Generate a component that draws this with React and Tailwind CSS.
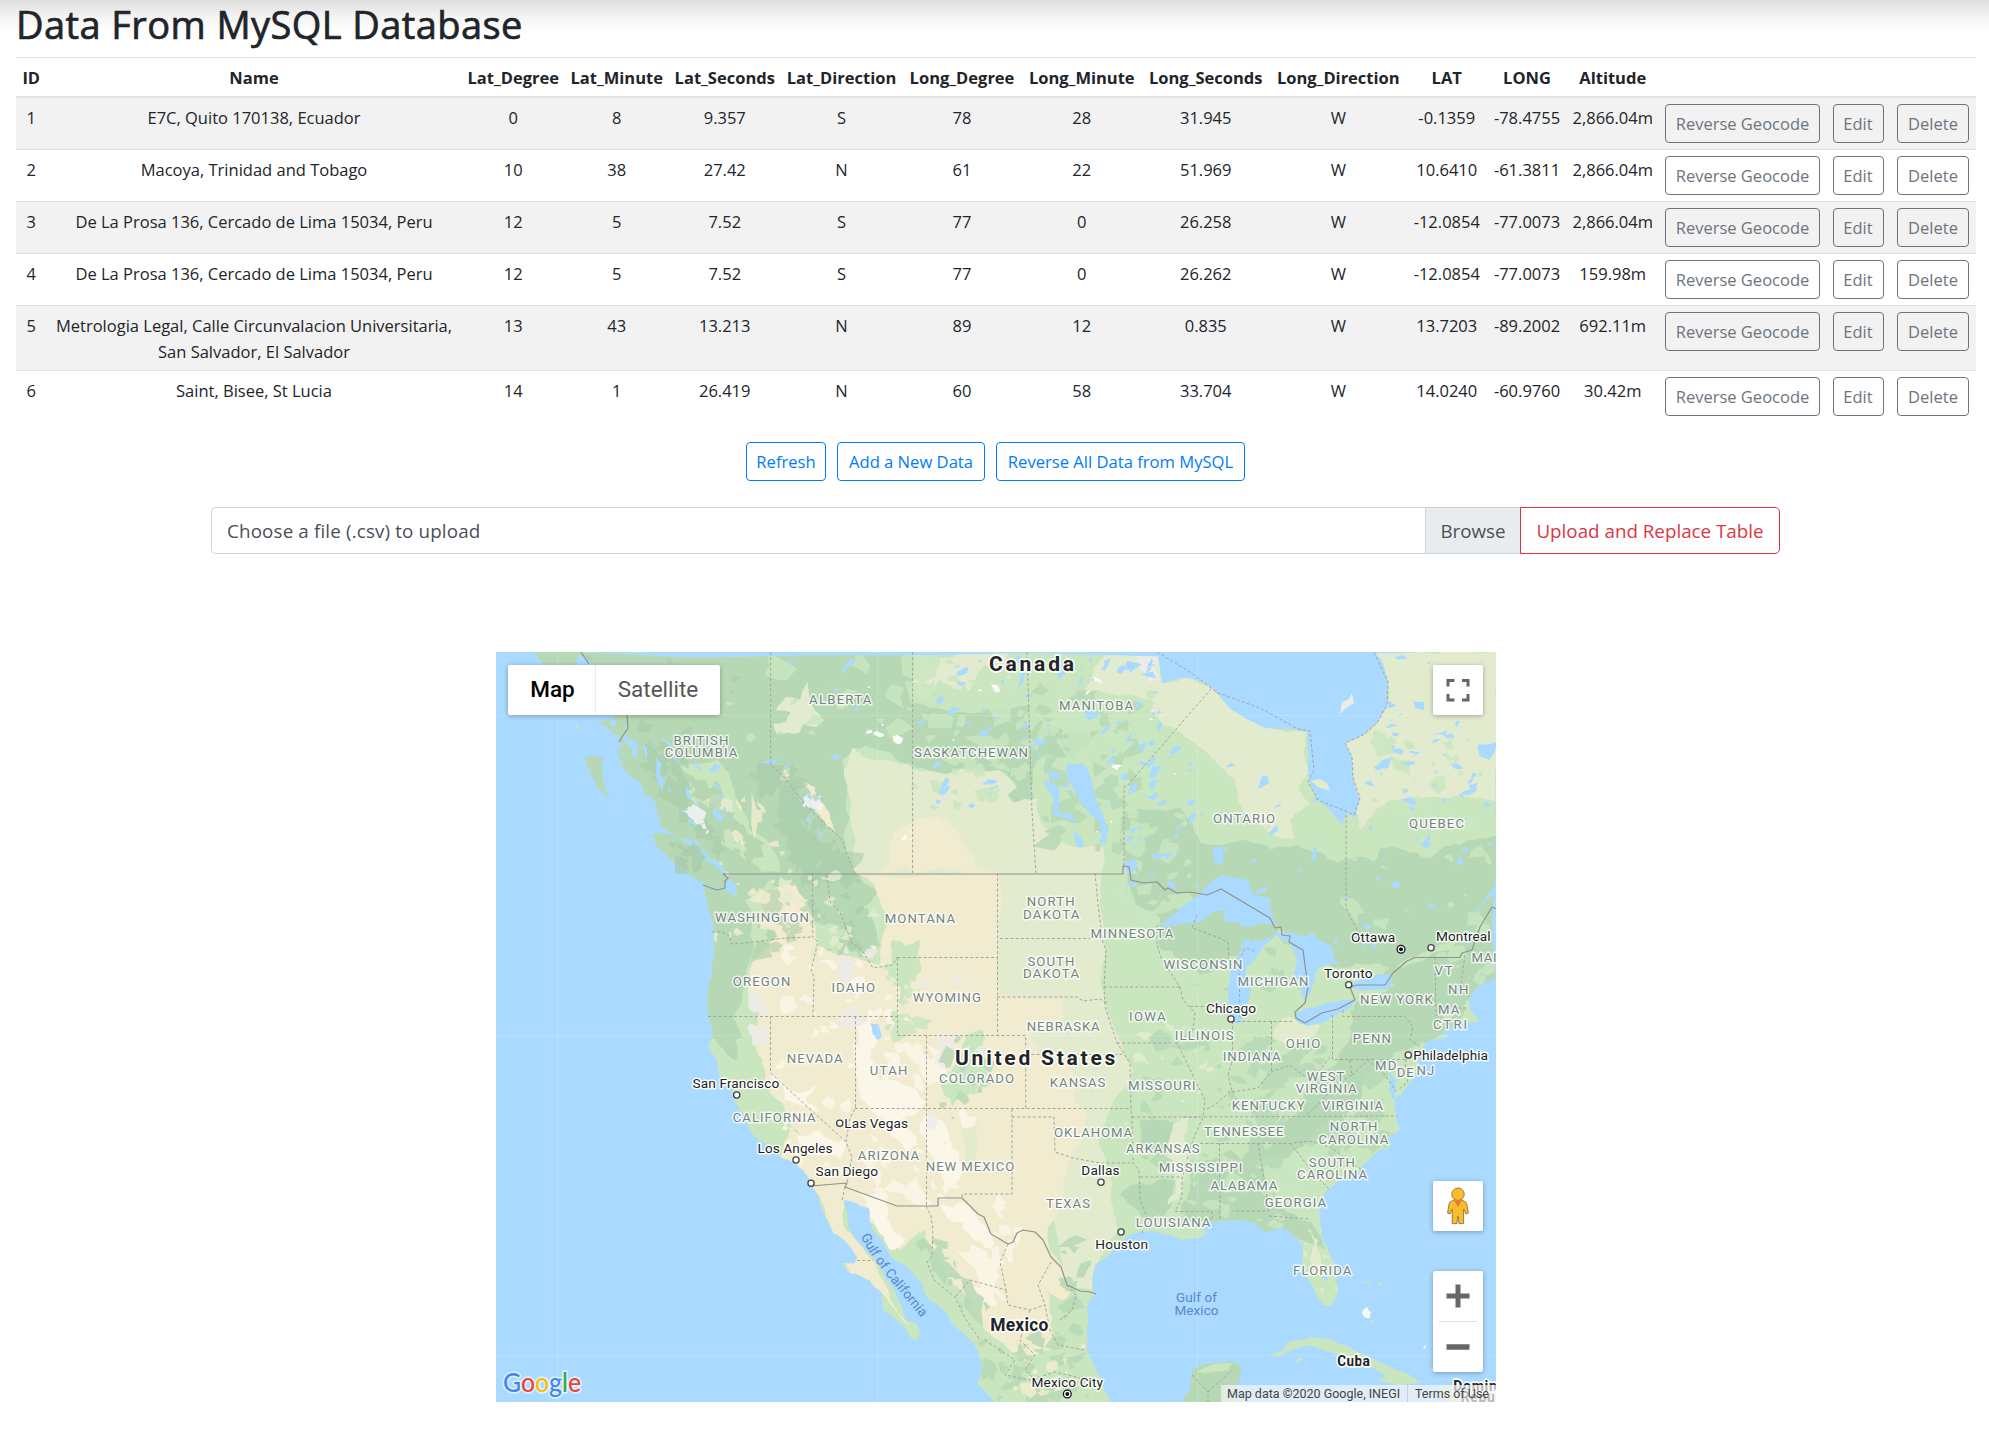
import React from "react";

/* ---------- table data ---------- */

const HEADERS = [
  "ID", "Name", "Lat_Degree", "Lat_Minute", "Lat_Seconds", "Lat_Direction",
  "Long_Degree", "Long_Minute", "Long_Seconds", "Long_Direction", "LAT", "LONG", "Altitude",
];

const COLUMN_WIDTHS = [30.5, 415, 103.5, 103.5, 112.5, 121, 120, 119.5, 128.5, 136.5, 80.5, 80, 91.5, 167.5, 64.5, 85.5];

const ROWS = [
  ["1", "E7C, Quito 170138, Ecuador", "0", "8", "9.357", "S", "78", "28", "31.945", "W", "-0.1359", "-78.4755", "2,866.04m"],
  ["2", "Macoya, Trinidad and Tobago", "10", "38", "27.42", "N", "61", "22", "51.969", "W", "10.6410", "-61.3811", "2,866.04m"],
  ["3", "De La Prosa 136, Cercado de Lima 15034, Peru", "12", "5", "7.52", "S", "77", "0", "26.258", "W", "-12.0854", "-77.0073", "2,866.04m"],
  ["4", "De La Prosa 136, Cercado de Lima 15034, Peru", "12", "5", "7.52", "S", "77", "0", "26.262", "W", "-12.0854", "-77.0073", "159.98m"],
  ["5", "Metrologia Legal, Calle Circunvalacion Universitaria, San Salvador, El Salvador", "13", "43", "13.213", "N", "89", "12", "0.835", "W", "13.7203", "-89.2002", "692.11m"],
  ["6", "Saint, Bisee, St Lucia", "14", "1", "26.419", "N", "60", "58", "33.704", "W", "14.0240", "-60.9760", "30.42m"],
];

function RowButton({ children, className }) {
  return (
    <button className={`h-[39px] rounded-[4px] border border-[#6c757d] text-center text-[16.5px] leading-[26px] whitespace-nowrap text-[#6c757d] ${className}`}>
      {children}
    </button>
  );
}

function DataTable() {
  return (
    <table className="w-[1960px] table-fixed border-separate border-spacing-0 text-center text-[16.5px] leading-[26px] text-[#212529]">
      <colgroup>
        {COLUMN_WIDTHS.map((w, i) => <col key={i} style={{ width: w }} />)}
      </colgroup>
      <thead>
        <tr className="h-[41px]">
          {HEADERS.map((h) => (
            <th key={h} className="border-t border-b-2 border-[#dee2e6] p-0 pt-0.5 align-middle font-bold whitespace-nowrap">{h}</th>
          ))}
          {[0, 1, 2].map((i) => <th key={i} className="border-t border-b-2 border-[#dee2e6] p-0" />)}
        </tr>
      </thead>
      <tbody>
        {ROWS.map((row, r) => {
          const line = r === 0 ? "" : "border-t border-[#dee2e6]";
          const height = r === 0 ? "h-[51px]" : r === 4 ? "h-[65px]" : "h-[52px]";
          return (
            <tr key={r} className={`${height} ${r % 2 === 0 ? "bg-[#f2f2f2]" : "bg-white"}`}>
              {row.map((cell, c) => (
                <td key={c} className={`${line} ${c === 1 ? "px-1.5" : "px-0 whitespace-nowrap"} pt-[7px] pb-0 align-top`}>{cell}</td>
              ))}
              <td className={`${line} p-0 pt-1.5 pl-[6.5px] text-left align-top`}><RowButton className="w-[155px]">Reverse Geocode</RowButton></td>
              <td className={`${line} p-0 pt-1.5 pl-[6.5px] text-left align-top`}><RowButton className="w-[51px]">Edit</RowButton></td>
              <td className={`${line} p-0 pt-1.5 pl-[6.5px] text-left align-top`}><RowButton className="w-[72px]">Delete</RowButton></td>
            </tr>
          );
        })}
      </tbody>
    </table>
  );
}

function ActionButton({ children, className }) {
  return (
    <button className={`h-[39px] rounded-[4px] border border-[#007bff] text-[16.6px] leading-[26px] whitespace-nowrap text-[#007bff] ${className}`}>
      {children}
    </button>
  );
}

/* ---------- map geometry ---------- */

function rng(seed) {
  let a = seed;
  return () => {
    a = (a + 0x6d2b79f5) | 0;
    let t = Math.imul(a ^ (a >>> 15), 1 | a);
    t = (t + Math.imul(t ^ (t >>> 7), 61 | t)) ^ t;
    return ((t ^ (t >>> 14)) >>> 0) / 4294967296;
  };
}

function parse(str) {
  return str.trim().split(/\s+/).map((p) => p.split(",").map(Number));
}

/* Subdivides an outline with midpoint displacement so that it reads as a natural edge. */
function rough(str, amp, seed) {
  let pts = parse(str);
  const rand = rng(seed);
  for (let pass = 0; pass < 3; pass++) {
    const next = [];
    for (let i = 0; i < pts.length; i++) {
      const [x1, y1] = pts[i];
      const [x2, y2] = pts[(i + 1) % pts.length];
      next.push(pts[i]);
      const len = Math.hypot(x2 - x1, y2 - y1);
      if (len > 5) {
        const d = (rand() - 0.5) * Math.min(len, 50) * amp;
        next.push([(x1 + x2) / 2 - ((y2 - y1) / len) * d, (y1 + y2) / 2 + ((x2 - x1) / len) * d]);
      }
    }
    pts = next;
  }
  return pts.map(([x, y]) => `${x.toFixed(1)},${y.toFixed(1)}`).join(" ");
}

/* Small irregular patches spread over a slanted box. */
function scatter({ box, n, size, seed, slant = 0, stretch = 1.3, angle = 0 }) {
  const rand = rng(seed);
  const [x, y, w, h] = box;
  let d = "";
  for (let i = 0; i < n; i++) {
    const v = rand();
    const cx = x + rand() * w + v * slant;
    const cy = y + v * h;
    const s = size * (0.3 + rand() * rand() * 1.6);
    const k = 4 + Math.floor(rand() * 5);
    const turn = angle + (rand() - 0.5) * 1.4;
    const pts = [];
    for (let j = 0; j < k; j++) {
      const a = (j / k) * Math.PI * 2 + rand() * 0.8;
      const r = s * (0.3 + rand() * 0.9);
      const px = Math.cos(a) * r * stretch;
      const py = Math.sin(a) * r;
      pts.push(`${(cx + px * Math.cos(turn) - py * Math.sin(turn)).toFixed(1)} ${(cy + px * Math.sin(turn) + py * Math.cos(turn)).toFixed(1)}`);
    }
    d += `M${pts.join("L")}Z`;
  }
  return d;
}

const WATER = "#aadaff";
const FOREST = "#b7d8b5";
const GREEN = "#c9e6bf";
const PLAIN = "#e3ebcf";
const SAND = "#f1ebcf";
const PALE = "#faf6e8";
const ROCK = "#ecebe6";
const SHADE = "#a6cba8";
const SNOW = "#f3f4f4";

const MAINLAND =
  "578,652 588,660 600,680 608,700 610,716 596,722 612,731 621,742 617,752 623,768 640,782 645,795 653,798 657,812 661,827 677,838 698,842 703,855 723,867 727,876 735,884 737,898 731,893 723,889 704,887 707,902 713,922 714,940 712,973 707,993 708,1013 713,1030 708,1047 717,1060 720,1077 732,1090 738,1107 748,1127 758,1140 780,1157 795,1163 805,1173 813,1188 820,1203 827,1220 833,1233 847,1243 857,1257 854,1264 842,1263 850,1273 870,1280 882,1293 883,1310 900,1323 910,1337 915,1341 920,1335 916,1323 905,1320 897,1297 885,1277 873,1257 860,1243 848,1227 844,1200 853,1202 869,1208 870,1223 882,1240 895,1260 913,1273 923,1285 927,1298 943,1310 963,1333 977,1350 982,1367 977,1383 990,1397 996,1404 1112,1404 1102,1383 1093,1363 1087,1350 1086,1330 1087,1307 1094,1295 1092,1280 1095,1265 1113,1250 1130,1235 1153,1231 1170,1235 1183,1240 1200,1238 1208,1233 1200,1225 1220,1222 1243,1220 1255,1223 1267,1233 1283,1228 1297,1238 1303,1247 1302,1263 1308,1278 1315,1292 1323,1305 1332,1305 1338,1290 1337,1270 1327,1247 1320,1222 1318,1207 1327,1190 1340,1180 1360,1170 1367,1162 1380,1150 1390,1147 1388,1137 1400,1130 1397,1120 1395,1100 1402,1093 1412,1080 1420,1067 1418,1057 1425,1043 1449,1037 1440,1033 1457,1023 1480,1022 1470,1010 1470,997 1480,985 1496,978 1500,650";

const HUDSON =
  "1157,648 1160,668 1162,683 1180,678 1190,678 1213,688 1232,710 1265,728 1290,729 1307,732 1308,768 1310,783 1318,800 1330,810 1342,825 1347,813 1355,818 1360,800 1353,778 1352,757 1345,743 1363,735 1377,723 1387,707 1388,682 1383,663 1373,648";

const LAKES = [
  "1160,926 1180,908 1200,895 1223,875 1248,880 1255,895 1270,897 1272,912 1277,927 1262,923 1247,927 1223,920 1227,908 1213,912 1200,922 1180,924",
  "1228,1003 1230,973 1238,953 1254,941 1272,936 1266,944 1258,955 1247,966 1246,978 1251,988 1248,1003 1242,1022 1232,1023",
  "1272,934 1290,932 1312,937 1332,947 1340,967 1330,963 1318,967 1314,982 1310,994 1305,1004 1301,988 1303,978 1294,980 1297,963 1290,945 1280,938",
  "1295,1013 1313,1008 1337,1002 1354,999 1350,1008 1323,1023 1307,1026 1296,1020",
  "1348,987 1363,978 1380,974 1393,977 1388,989 1360,991",
  "1068,763 1083,763 1092,782 1098,805 1107,825 1105,843 1099,843 1100,822 1085,808 1072,785 1067,777",
  "1044,780 1054,783 1060,792 1058,812 1072,814 1076,823 1070,820 1054,816 1053,798 1046,787",
  "1045,770 1056,772 1062,780 1052,778",
  "1072,830 1080,836 1084,847 1077,847",
  "1016,655 1026,660 1024,680 1018,690 1020,675",
  "1212,848 1222,846 1223,865 1214,862",
  "1422,843 1436,820 1430,838 1425,850",
  "1374,767 1392,757 1388,768 1376,770",
  "1400,762 1416,762 1408,766",
  "1478,745 1496,742 1490,760 1479,755",
  "1413,700 1424,702 1424,710 1415,708",
  "1388,700 1396,706 1388,708",
  "1433,735 1447,730 1445,735",
  "956,672 968,667 967,673 958,676",
  "980,732 988,728 988,736 981,737",
  "870,1023 878,1024 882,1036 878,1040 872,1032",
  "1124,862 1136,858 1138,866 1128,875",
  "1496,882 1484,900 1470,915 1478,911 1496,892",
  "1390,1070 1396,1080 1396,1100 1392,1098 1390,1082",
  "1322,1277 1328,1275 1328,1281",
];

const ZONES = [
  ["F1", "534,652 915,650 912,700 980,712 1028,705 1040,720 1100,730 1075,760 1045,755 1030,790 1035,800 1015,803 1008,795 1017,785 1000,770 973,770 943,773 917,768 900,762 853,748 842,760 846,800 852,870 880,890 866,905 880,945 860,958 845,930 822,925 800,900 770,880 745,900 752,940 745,985 733,1020 742,1040 738,1060 715,1040 700,1013 705,930 690,880 640,800 580,740", FOREST, 0.3],
  ["F2", "1125,812 1180,808 1200,842 1247,840 1297,845 1320,852 1337,862 1373,862 1380,848 1427,858 1460,845 1500,836 1500,990 1466,1000 1440,1035 1400,1040 1350,1030 1356,1002 1395,985 1330,965 1280,928 1240,955 1225,960 1200,975 1180,960 1160,948 1160,920 1135,905 1128,870", FOREST, 0.3],
  ["F3", "1350,1010 1420,1005 1440,1030 1395,1052 1365,1075 1350,1110 1310,1140 1280,1160 1240,1165 1250,1135 1300,1110 1310,1080 1338,1060", FOREST, 0.3],
  ["F4", "1190,1160 1230,1150 1262,1165 1275,1205 1312,1222 1325,1250 1300,1240 1265,1232 1230,1222 1180,1212 1190,1190", FOREST, 0.3],
  ["F5", "1140,1120 1180,1122 1170,1150 1140,1150", FOREST, 0.35],
  ["F6", "1130,1185 1175,1180 1165,1215 1140,1215 1120,1195", FOREST, 0.35],
  ["L0", "680,766 718,760 732,785 735,800 750,830 768,842 780,872 762,872 740,855 722,845 712,825 690,805", GREEN, 0.25],
  ["L6", "706,800 718,794 732,800 733,812 718,812", PLAIN, 0.3],
  ["L1", "853,748 900,764 943,774 973,770 1000,770 1017,788 1007,795 1013,803 1037,798 1040,822 1057,838 1073,847 1103,847 1102,873 1100,905 1105,945 1105,1000 1120,1040 1133,1070 1110,1110 1098,1140 1108,1170 1113,1207 1118,1230 1100,1257 1092,1290 1070,1290 1030,1150 990,1000 870,880 853,870 850,812 844,770", PLAIN, 0.2],
  ["L2", "1085,690 1110,650 1157,650 1162,683 1190,677 1213,688 1232,710 1265,728 1307,732 1308,768 1298,790 1310,805 1290,820 1295,838 1280,838 1262,825 1245,815 1235,780 1215,760 1190,740 1160,722 1150,700", PLAIN, 0.2],
  ["L3", "1373,650 1500,650 1500,802 1460,795 1440,797 1415,800 1390,800 1375,810 1360,830 1357,800 1352,755 1345,743 1377,723 1388,705 1388,680", PLAIN, 0.2],
  ["L4", "915,652 1010,650 1010,680 985,665 970,690 940,680 925,700 915,690", PLAIN, 0.3],
  ["L5", "786,697 800,700 808,682 810,700 824,720 815,727 803,724 800,732 776,733 773,724 786,722 790,712 776,710", PLAIN, 0.2],
  ["R0", "1135,652 1160,652 1157,680 1148,682 1140,668", ROCK, 0.2],
  ["S2", "802,782 815,787 830,815 836,832 826,826 812,806", SAND, 0.3],
  ["S3", "783,770 790,768 790,780 780,780", SAND, 0.3],
  ["S0", "905,825 925,818 950,822 965,845 980,870 880,875 890,860 893,835", SAND, 0.3],
  ["S1", "866,874 998,873 998,945 1000,995 1060,997 1064,1020 1030,1035 1040,1058 1072,1070 1074,1100 1088,1113 1083,1140 1070,1160 1062,1205 1048,1227 1050,1250 1072,1287 1055,1320 1062,1350 1020,1360 985,1330 950,1290 932,1255 925,1230 900,1250 870,1222 844,1200 846,1230 875,1262 905,1320 915,1338 882,1293 850,1273 830,1225 813,1188 780,1157 790,1130 770,1100 752,1040 760,1010 748,1000 752,960 775,935 760,925 770,890 790,880 812,910 818,945 840,955 880,965 890,920", SAND, 0.18],
  ["G1", "735,1040 752,1040 765,1080 785,1110 800,1135 782,1125 760,1095 748,1110 738,1085", GREEN, 0.3],
  ["G2", "918,1230 935,1250 950,1280 972,1310 985,1345 970,1340 945,1300 925,1270", GREEN, 0.3],
  ["G3", "1045,1290 1062,1300 1085,1300 1086,1350 1110,1404 990,1404 975,1375 985,1350 1010,1370 1045,1370 1062,1345", GREEN, 0.35],
  ["G4", "965,1035 982,1030 985,1060 975,1095 950,1115 940,1085 955,1065", GREEN, 0.5],
  ["G5", "892,940 920,940 915,980 905,1010 898,985", GREEN, 0.5],
  ["G6", "960,1125 980,1120 975,1160 962,1165", PLAIN, 0.5],
  ["W1", "855,1025 870,1020 868,1060 880,1080 905,1085 925,1100 900,1120 918,1145 905,1150 888,1120 870,1108 858,1080", PALE, 0.4],
  ["W2", "770,1075 790,1090 815,1085 805,1100 825,1115 800,1105 785,1100", PALE, 0.4],
  ["W3", "797,1135 820,1130 845,1140 840,1160 818,1155 800,1148", PALE, 0.4],
  ["W4", "925,1115 945,1125 955,1150 960,1180 945,1195 935,1170 928,1150", PALE, 0.4],
  ["W5", "855,1190 880,1195 890,1225 905,1240 890,1250 875,1225 868,1208", PALE, 0.35],
  ["W6", "940,1205 965,1202 985,1225 992,1250 970,1235 950,1220", PALE, 0.4],
  ["K1", "750,990 765,1000 768,1015 750,1010", ROCK, 0.4],
  ["K2", "748,1025 768,1028 765,1048 752,1045", ROCK, 0.4],
  ["K3", "838,955 850,955 855,970 848,985 838,975", ROCK, 0.4],
  ["P1", "1283,1018 1296,1020 1320,1025 1290,1045 1272,1040", PLAIN, 0.4],
  ["P2", "1180,1120 1196,1115 1190,1160 1178,1200 1168,1205 1175,1170", PLAIN, 0.5],
  ["P3", "1308,1228 1318,1240 1322,1270 1310,1262", PLAIN, 0.4],
  ["G7", "1398,965 1430,950 1470,930 1450,950 1420,962 1395,972", GREEN, 0.3],
  ["G8", "1310,985 1345,968 1390,968 1350,990 1315,1005", GREEN, 0.3],
];

const PATCHES = [
  { box: [625, 745, 50, 110], slant: 90, n: 90, size: 8, seed: 3, stretch: 1.6, angle: 0.8, color: SHADE },
  { box: [750, 770, 45, 110], slant: 60, n: 110, size: 9, seed: 4, stretch: 2, angle: 2.2, color: SHADE },
  { box: [505, 652, 240, 90], n: 30, size: 8, seed: 5, color: SHADE },
  { box: [755, 880, 110, 70], n: 36, size: 8, seed: 6, color: SHADE },
  { box: [915, 660, 240, 150], n: 95, size: 11, seed: 7, stretch: 1.3, color: GREEN },
  { box: [1040, 690, 100, 160], n: 45, size: 10, seed: 8, color: FOREST },
  { box: [1120, 790, 70, 130], n: 24, size: 9, seed: 9, color: GREEN },
  { box: [720, 652, 190, 90], n: 14, size: 10, seed: 10, color: GREEN },
  { box: [700, 840, 100, 100], n: 16, size: 6, seed: 11, color: SAND },
  { box: [780, 870, 100, 90], n: 26, size: 6, seed: 12, color: PLAIN },
  { box: [780, 940, 120, 160], n: 30, size: 8, seed: 13, color: PALE },
  { box: [860, 1040, 110, 160], n: 50, size: 9, seed: 14, stretch: 1.6, angle: 1, color: PALE },
  { box: [780, 1100, 70, 80], n: 16, size: 7, seed: 15, color: PALE },
  { box: [970, 1200, 60, 100], n: 20, size: 8, seed: 16, stretch: 1.8, angle: 1, color: PALE },
  { box: [835, 940, 130, 80], n: 22, size: 7, seed: 17, color: ROCK },
  { box: [930, 1040, 60, 110], n: 14, size: 6, seed: 19, color: ROCK },
  { box: [885, 955, 40, 80], n: 22, size: 8, seed: 20, color: GREEN },
  { box: [940, 1030, 50, 90], n: 16, size: 8, seed: 21, color: FOREST },
  { box: [682, 805, 10, 30], slant: 26, n: 13, size: 7, seed: 22, stretch: 1, color: SNOW },
  { box: [795, 780, 15, 50], slant: 30, n: 5, size: 5, seed: 24, color: SNOW },
  { box: [735, 800, 40, 50], n: 6, size: 6, seed: 23, stretch: 2.2, angle: 1.3, color: SAND },
  { box: [1250, 1040, 140, 120], n: 60, size: 10, seed: 25, stretch: 1.8, angle: -0.6, color: FOREST },
  { box: [1140, 1040, 110, 130], n: 24, size: 9, seed: 26, color: FOREST },
  { box: [1190, 1140, 140, 90], n: 55, size: 8, seed: 27, color: GREEN },
  { box: [1120, 1010, 120, 130], n: 16, size: 5, seed: 28, color: PLAIN },
  { box: [1300, 1230, 40, 70], n: 14, size: 6, seed: 29, color: PLAIN },
  { box: [970, 1330, 120, 70], n: 40, size: 8, seed: 30, color: FOREST },
  { box: [1000, 1340, 90, 60], n: 20, size: 6, seed: 31, color: SAND },
  { box: [1300, 800, 190, 60], n: 24, size: 9, seed: 32, color: GREEN },
  { box: [1380, 740, 110, 60], n: 14, size: 9, seed: 33, color: GREEN },
  { box: [1350, 840, 140, 90], n: 9, size: 8, seed: 34, color: GREEN },
  { box: [1060, 1240, 25, 90], n: 12, size: 9, seed: 35, color: FOREST },
  { box: [915, 1240, 25, 70], slant: 50, n: 20, size: 8, seed: 36, stretch: 1.8, angle: 0.9, color: FOREST },
  { box: [1420, 950, 70, 80], n: 14, size: 7, seed: 37, color: GREEN },
  { box: [1190, 930, 130, 80], n: 14, size: 8, seed: 38, color: FOREST },
];

const PONDS = [
  { box: [915, 660, 250, 150], n: 70, size: 4, seed: 51, stretch: 1.8, angle: -0.5, color: WATER },
  { box: [1125, 745, 70, 150], n: 36, size: 4, seed: 52, stretch: 1.9, angle: -0.3, color: WATER },
  { box: [1190, 760, 300, 190], n: 65, size: 3.4, seed: 53, stretch: 1.8, angle: -0.7, color: WATER },
  { box: [1390, 655, 100, 160], n: 30, size: 4, seed: 54, stretch: 1.8, color: WATER },
  { box: [700, 655, 180, 120], n: 14, size: 3.4, seed: 55, stretch: 2.4, angle: -0.4, color: WATER },
  { box: [640, 740, 60, 120], slant: 50, n: 24, size: 3, seed: 56, stretch: 3, angle: 0.9, color: WATER },
  { box: [590, 715, 30, 40], slant: 20, n: 22, size: 4.4, seed: 57, stretch: 1.9, angle: 1, color: WATER },
  { box: [795, 790, 20, 60], slant: 20, n: 8, size: 3, seed: 59, stretch: 3, angle: 1, color: WATER },
  { box: [860, 660, 340, 230], n: 22, size: 3, seed: 58, stretch: 1.6, color: "#fbfbf7" },
];

const ISLANDS = [
  "585,757 594,756 603,758 602,772 605,788 613,803 597,788 590,773",
  "652,835 660,832 672,836 693,847 705,860 720,870 727,880 723,889 704,884 690,875 673,862 657,848",
  "534,652 580,652 576,668 560,664 548,668 540,660",
  "575,722 580,728 577,729",
  "1190,1404 1182,1400 1190,1390 1192,1370 1200,1366 1213,1363 1232,1361 1242,1367 1240,1380 1234,1392 1235,1404",
  "1270,1355 1282,1351 1287,1343 1310,1337 1333,1340 1353,1350 1380,1363 1410,1375 1422,1382 1397,1385 1377,1380 1386,1375 1370,1367 1347,1357 1323,1350 1310,1345 1293,1350 1278,1357",
  "1296,1359 1302,1357 1302,1361 1297,1363",
  "1357,1283 1370,1281 1370,1283",
  "1377,1281 1382,1284 1379,1293 1380,1286",
  "1362,1312 1367,1307 1371,1313 1370,1318 1364,1317",
  "1370,1320 1373,1321 1373,1327",
  "1437,1388 1460,1384 1480,1386 1500,1392 1500,1404 1450,1404",
  "1423,1348 1426,1344 1425,1349",
  "1430,1370 1436,1368 1436,1371",
];

const STATE_LINES = [
  "770.7,652 770.7,765 784,777 798,795 806,806 835,833 842,840 850,862 855,873",
  "912.6,652 912.6,873", "1027,652 1032,812 1036,873",
  "1124,866 1124,787 1128,785 1190,713 1212,688",
  "1157,652 1190,672 1218,693 1260,708 1298,729 1310,731 1314,770 1308,782 1318,800 1345,811 1354,815 1360,798 1353,778 1352,757 1345,743 1363,735 1377,723 1387,705 1388,682 1374,652",
  "1346,815 1346,908 1357,930 1366,942",
  "712,932 722,932 730,936 731,944 745,943 785,938 812,937", "812.7,873 812.7,937 818,942 811,970 814,977 813,1016",
  "708,1016.5 897,1016.5", "770.5,1016 770.5,1073 846,1142", "855.5,1016 855.5,1108 850,1118 846,1142 852,1157 847,1183",
  "827,875 830,902 840,912 852,943 862,950 873,968 893,965 897,957", "897.5,957.5 997.5,957.5", "897.5,957.5 897.5,1035.5 1025.7,1035.5 1025.7,1108.5",
  "997.5,873 997.5,1035", "926.5,1035.5 926.5,1206", "855,1108.5 1131,1108.5", "1026,1054.5 1122,1054.5",
  "997,997 1077,997 1083,1001 1100,999 1107,1003", "1000,938.5 1102,938.5",
  "1095,873 1098,905 1103,943 1106,950 1104,987 1105,1007 1117,1043 1130,1063 1131,1108 1132,1117 1133,1163 1139,1170 1140,1200 1147,1217 1142,1233",
  "1104,987 1180,987", "1117,1043 1177,1043",
  "1157,925 1157,945 1162,960 1180,987 1183,1000 1195,1013 1193,1030 1177,1043 1187,1063 1195,1080 1205,1100 1203,1117 1193,1140 1187,1160 1182,1180 1182,1197 1175,1212",
  "1132,1117 1200,1117", "1140,1177 1182,1177", "1175,1211.5 1212,1211.5 1212,1221",
  "1012,1109 1012,1194 962,1194 962,1198", "1012,1117 1054,1117 1055,1152 1073,1158 1100,1163 1133,1163",
  "1190,1006.5 1230,1006.5", "1232.5,1021 1232.5,1060 1228,1075 1232,1090 1215,1105 1205,1110", "1271.5,1021 1271.5,1072", "1232,1021.5 1293,1021.5",
  "1232,1092 1258,1088 1271,1072 1290,1065 1310,1080 1320,1070 1332,1055", "1332.5,1015 1332.5,1059.5 1406,1059.5", "1343,1010 1343,1016.5 1405,1016.5 1413,1027 1410,1040 1419,1046",
  "1406,1059 1405,1068 1408,1082 1398,1090", "1435,957 1436,1016", "1183,1117 1398,1116", "1195,1143.5 1290,1143.5 1310,1141 1330,1147 1362,1170", "1219.5,1143 1220,1220",
  "1258,1143 1265,1185 1269,1211 1233,1211", "1269,1216 1310,1219", "1290,1143 1315,1175 1330,1190", "1350,1060 1352,1075 1335,1085 1320,1103 1305,1116", "1352,1075 1368,1060 1385,1075 1396,1091",
  "1465,955 1461,985 1470,998", "1437,1008 1466,1008", "1438,1020 1460,1020", "1197,915 1192,928 1220,938 1228,943 1229,960", "1240,1018 1239,960 1246,948 1256,952",
  "926,1206 931,1216 933,1230 932,1256 927,1262 934,1280 955,1297 965,1318 980,1340", "1008,1244 1000,1262 1006,1290 970,1280 955,1297",
  "1006,1290 1008,1305 1030,1310 1045,1305 1050,1330 1058,1345 1084,1350", "1051,1262 1038,1285 1045,1305", "1067,1285 1076,1295 1072,1310 1060,1320", "1030,1310 1020,1340 1035,1355 1025,1370 1040,1385", "985,1340 1000,1350 1015,1360 1005,1375 1030,1380 1055,1372 1080,1378",
  "1192,1375 1208,1392 1208,1402", "1208,1392 1232,1370", "845,1187 842,1200", "857,1260.5 873,1260.5",
];

const COUNTRY_LINES = [
  "581,652 589,664", "627,715 628,728 619,742", "703,885 717,890 725,888 725,881 728,878 723,874 1123,874 1123,866 1129,867 1131,880 1143,883 1157,882 1165,890 1168,888 1177,893 1190,892 1207,895 1221,889 1270,918 1275,928 1281,927 1282,935 1290,936 1289,942 1303,950 1308,987 1305,1003 1295,1012 1296,1018 1305,1023 1322,1013 1338,1009 1355,1000 1350,987 1357,985 1385,985 1393,973 1407,961 1415,957.5 1460,957.5 1462,953 1472,950 1480,927 1492,907 1497,909",
  "811,1186 847,1183 845,1187 897,1206 938,1206 938,1198 962,1198 978,1214 984,1217 991,1234 1008,1244 1013,1242 1017,1233 1023,1230 1035,1232 1043,1240 1051,1257 1061,1267 1067,1285 1080,1291 1090,1292 1096,1294",
];

const STATES = [
  ["BRITISH", 674.3, 727.7, 744.7], ["COLUMBIA", 665.7, 736.7, 757.3], ["ALBERTA", 810, 870.7, 704.3], ["WASHINGTON", 716, 808.3, 921.7],
  ["SASKATCHEWAN", 915, 1027.3, 757.3], ["MANITOBA", 1060, 1132.3, 710.3], ["MONTANA", 885.7, 954.3, 923.3], ["NORTH", 1027.7, 1074, 906.3],
  ["DAKOTA", 1024, 1078.7, 919], ["MINNESOTA", 1091.3, 1172.7, 938], ["ONTARIO", 1214, 1274.3, 823.3], ["QUEBEC", 1410, 1463.3, 828],
  ["OREGON", 733.7, 789.7, 986], ["IDAHO", 832.3, 874.3, 992.3], ["WYOMING", 913.7, 980.3, 1001.7], ["NEVADA", 787.7, 842, 1063],
  ["UTAH", 870.7, 906.7, 1075.3], ["CALIFORNIA", 733.7, 815, 1122], ["ARIZONA", 858.7, 918.3, 1160.3], ["COLORADO", 940, 1013.3, 1083],
  ["NEW MEXICO", 926.7, 1013.7, 1171], ["SOUTH", 1028.3, 1073.7, 966], ["DAKOTA", 1024, 1078.3, 978.3], ["NEBRASKA", 1027.7, 1099, 1031.3],
  ["KANSAS", 1050.7, 1104.7, 1086.7], ["IOWA", 1130, 1165, 1021], ["WISCONSIN", 1164.3, 1241.7, 968.7], ["ILLINOIS", 1175.7, 1233, 1040.3],
  ["MISSOURI", 1129, 1195, 1090], ["OKLAHOMA", 1055, 1131.3, 1136.7], ["ARKANSAS", 1127, 1199, 1153.3], ["MISSISSIPPI", 1159.7, 1241.7, 1171.7],
  ["TEXAS", 1047, 1089.3, 1208], ["LOUISIANA", 1136.7, 1209.7, 1227], ["MICHIGAN", 1238.3, 1307.7, 986], ["MAINE", 1472.3, 1514, 962.3],
  ["VT", 1435.3, 1452, 974.7], ["NH", 1449, 1467.7, 994.3], ["NEW YORK", 1361, 1432, 1004], ["MA", 1439, 1458.7, 1014.3],
  ["CT", 1434, 1450.3, 1029], ["RI", 1454.3, 1466.3, 1029], ["OHIO", 1286.7, 1319.7, 1048], ["PENN", 1353.7, 1390.3, 1043],
  ["MD", 1376, 1395.7, 1069.7], ["DE", 1397.7, 1413, 1077], ["NJ", 1417.3, 1433.7, 1075], ["INDIANA", 1223.7, 1280, 1061.3],
  ["WEST", 1307.7, 1343.7, 1081], ["VIRGINIA", 1296.7, 1356, 1093.3], ["KENTUCKY", 1232.7, 1304, 1110.3], ["VIRGINIA", 1322.7, 1382.3, 1110.3],
  ["TENNESSEE", 1205, 1282.7, 1136.3], ["NORTH", 1330.7, 1376.7, 1131.3], ["CAROLINA", 1319.3, 1387.7, 1143.7], ["SOUTH", 1309.7, 1354.3, 1166.7],
  ["CAROLINA", 1298, 1366.3, 1179.3], ["ALABAMA", 1211.3, 1276.7, 1190.3], ["GEORGIA", 1265.7, 1325.3, 1206.7], ["FLORIDA", 1294, 1350.7, 1275],
];

const CITIES = [
  ["Ottawa", 1351.7, 1395, 942.3, 1401, 949.3, true], ["Montreal", 1436.7, 1490.3, 941, 1431, 947.7], ["San Francisco", 693.3, 779, 1088.3, 736.7, 1095],
  ["Las Vegas", 845, 907.7, 1128.3, 839.7, 1123.3], ["Los Angeles", 758.3, 832.3, 1153.3, 796, 1160], ["San Diego", 816.3, 877.7, 1176.3, 811, 1183.3],
  ["Dallas", 1082, 1119.3, 1175.3, 1101, 1182.3], ["Houston", 1096, 1147.7, 1249, 1121, 1232], ["Chicago", 1206.7, 1255.7, 1012.7, 1231, 1019],
  ["Mexico City", 1032.3, 1102.7, 1386.7, 1067.3, 1394, true], ["Toronto", 1324.7, 1372.3, 977.7, 1348.7, 984.7], ["Philadelphia", 1414, 1487.7, 1060, 1408.3, 1055],
];

const COUNTRIES = [
  ["Canada", 990, 1074, 671, 21], ["United States", 956, 1115.3, 1065.3, 21], ["Mexico", 991.3, 1048.3, 1331, 17.5],
  ["Cuba", 1338.3, 1369.8, 1366, 13.8], ["Dominican", 1454.3, 1526, 1391, 14], ["Republic", 1461.7, 1520, 1402, 14],
];

function MapDrawing() {
  return (
    <svg viewBox="496 652 1000 750" className="block h-full w-full" fontFamily="Roboto, sans-serif">
      <defs>
        <clipPath id="land"><polygon points={rough(MAINLAND, 0.16, 1)} /></clipPath>
        <path id="gulf" d="M861 1236 C 872 1262, 898 1288, 923 1320" />
      </defs>
      <rect x="496" y="652" width="1000" height="750" fill={WATER} />
      {ISLANDS.map((p, i) => <polygon key={i} points={rough(p, 0.15, 200 + i)} fill={i === 0 || i === 1 || i === 2 || i === 4 ? FOREST : i === 9 || i > 11 ? "#f6faf0" : GREEN} />)}
      <polygon points="1196,1372 1213,1364 1232,1363 1228,1370 1206,1373" fill={GREEN} />
      <path d={scatter({ box: [668, 845, 24, 28], slant: 10, n: 9, size: 7, seed: 90, stretch: 1.5, angle: 0.6 })} fill={SHADE} opacity="0.7" />
      <g clipPath="url(#land)">
        <rect x="496" y="652" width="1000" height="750" fill={GREEN} />
        {ZONES.map(([id, pts, fill, amp], i) => <polygon key={id} points={rough(pts, amp, 300 + i)} fill={fill} />)}
        {PATCHES.map((p) => <path key={p.seed} d={scatter(p)} fill={p.color} opacity={p.color === SHADE ? 0.55 : 0.85} />)}
        {PONDS.map((p) => <path key={p.seed} d={scatter(p)} fill={p.color} />)}
      </g>
      <polygon points={rough(HUDSON, 0.06, 77)} fill={WATER} />
      <polygon points="1340,714 1342,702 1348,700 1352,693 1354,703 1346,708" fill={ROCK} />
      <polygon points="1311,781 1320,779 1327,783 1330,791 1318,787" fill={PLAIN} />
      {LAKES.map((p, i) => <polygon key={i} points={rough(p, 0.2, 400 + i)} fill={WATER} />)}

      <g stroke="#fff" strokeOpacity="0.16" strokeWidth="1">
        <path d="M557.5 652V1402M877.5 652V1402M1197.5 652V1402M496 715.5H1496M496 1035.5H1496M496 1355.5H1496" />
      </g>
      <g fill="none" stroke="#a8a3a2" strokeWidth="1" strokeDasharray="3 2.2">
        {STATE_LINES.map((p) => <polyline key={p} points={p} />)}
      </g>
      <g fill="none" stroke="#8e9290" strokeWidth="1.2" strokeLinejoin="round">
        {COUNTRY_LINES.map((p) => <polyline key={p} points={p} />)}
      </g>

      <g fill="#74857f" stroke="#fff" strokeOpacity="0.8" strokeWidth="3" strokeLinejoin="round" paintOrder="stroke" fontSize="13.2">
        {STATES.map(([t, x1, x2, y]) => <text key={t + x1} x={x1 - 0.9} y={y - 0.2} textLength={x2 - x1 + 1.6}>{t}</text>)}
      </g>
      <g fill="#5b87cb" fontSize="13.5">
        <text x="1176" y="1301.7" textLength="41">Gulf of</text>
        <text x="1174.5" y="1315" textLength="44">Mexico</text>
        <text><textPath href="#gulf" textLength="102">Gulf of California</textPath></text>
      </g>
      {CITIES.map(([t, x1, x2, y, cx, cy, capital]) => (
        <g key={t}>
          <text x={x1 - 0.7} y={y - 0.2} textLength={x2 - x1 + 1} fontSize="13.7" fill="#1d1f21" stroke="#fff" strokeOpacity="0.9" strokeWidth="3" strokeLinejoin="round" paintOrder="stroke">{t}</text>
          <circle cx={cx} cy={cy} r={capital ? 3.9 : 3.1} fill="#fff" stroke={capital ? "#111" : "#444"} strokeWidth="1.3" />
          {capital && <circle cx={cx} cy={cy} r="2" fill="#111" />}
        </g>
      ))}
      <g fill="#222426" fontWeight="700" stroke="#fff" strokeOpacity="0.9" strokeWidth="3.5" strokeLinejoin="round" paintOrder="stroke">
        {COUNTRIES.map(([t, x1, x2, y, s]) => <text key={t} x={x1 - 1} y={y} fontSize={s} textLength={x2 - x1 + 1}>{t}</text>)}
      </g>
      <text x="503" y="1392" textLength="78" lengthAdjust="spacingAndGlyphs" fontFamily="Lato, sans-serif" fontWeight="500" fontSize="26" stroke="#fff" strokeOpacity="0.6" strokeWidth="3.5" strokeLinejoin="round" paintOrder="stroke">
        <tspan fill="#4285f4">G</tspan><tspan fill="#ea4335">o</tspan><tspan fill="#fbbc05">o</tspan><tspan fill="#4285f4">g</tspan><tspan fill="#34a853">l</tspan><tspan fill="#ea4335">e</tspan>
      </text>
    </svg>
  );
}

function Pegman() {
  return (
    <svg viewBox="0 0 24 38" className="h-[38px] w-6">
      <g fill="#fbbc2b" stroke="#8a7340" strokeWidth="0.9" strokeLinejoin="round">
        <path d="M5 14.5 C3 15 3 17 2.6 19.5 L1.6 26 L4 27 L6.2 22 V36.6 H11 L11.6 29.5 H12.4 L13 36.6 H17.6 V22 L20 27 L22.4 26 L21.2 19.5 C20.8 17 20.8 15 18.6 14.5 L14 12 H10 Z" />
        <circle cx="12" cy="7.2" r="6.2" />
      </g>
      <path d="M8 13.5 H16 L12 20 Z" fill="#e37e2e" />
    </svg>
  );
}

function GoogleMap() {
  const card = "absolute rounded-[2px] bg-white shadow-[0_1px_5px_rgba(0,0,0,0.3)]";
  return (
    <div className="relative h-[750px] w-[1000px] overflow-hidden font-[Roboto,sans-serif]">
      <MapDrawing />
      <div className={`${card} top-[13px] left-3 flex h-[50px] w-[212px] text-[22.5px] leading-[48px]`}>
        <div className="w-[88px] border-r border-[#ebebeb] pl-0.5 text-center font-medium text-black">Map</div>
        <div className="flex-1 text-center text-[#565656]">Satellite</div>
      </div>
      <div className={`${card} top-[13px] right-[13px] flex size-[50px] items-center justify-center`}>
        <svg viewBox="0 0 24 24" className="size-6" fill="none" stroke="#666" strokeWidth="3">
          <path d="M2 8.5V2.5H8.5M16 2.5H22V8.5M22 16V22H16M8.5 22H2V16" />
        </svg>
      </div>
      <div className={`${card} top-[529px] right-[13px] flex size-[50px] items-center justify-center`}><Pegman /></div>
      <div className={`${card} top-[619px] right-[13px] flex h-[101px] w-[50px] flex-col items-center`}>
        <svg viewBox="0 0 24 24" className="mt-[13px] size-6" stroke="#666" strokeWidth="5"><path d="M0.5 12H23.5M12 0.5V23.5" /></svg>
        <div className="mt-[13px] h-px w-[38px] bg-[#e0e0e0]" />
        <svg viewBox="0 0 24 24" className="mt-[13px] size-6" stroke="#666" strokeWidth="5.5"><path d="M0.5 12H23.5" /></svg>
      </div>
      <div className="absolute right-0 bottom-0 flex h-[17px] w-[275px] items-center bg-[#f5f5f5]/70 text-[12.5px] leading-[17px] whitespace-nowrap text-[#444]">
        <span className="w-[186px] pl-1.5">Map data ©2020 Google, INEGI</span>
        <span className="border-l border-[#bcd4e8] pl-[7px]">Terms of Use</span>
      </div>
    </div>
  );
}

export default function App() {
  return (
    <div className="relative flex h-[1431px] w-[1989px] flex-col overflow-hidden bg-white font-['Open_Sans','Noto_Sans',sans-serif]">
      <div className="absolute inset-x-0 top-0 h-[34px] bg-linear-to-b from-[#dedede] via-[#f4f4f4] to-white" />
      <div className="relative flex flex-col pl-4">
        <h1 className="h-[57px] text-[38px] leading-[49px] font-medium tracking-[0.42px] whitespace-nowrap text-[#212529] [-webkit-text-stroke:0.7px_#212529]">Data From MySQL Database</h1>
        <DataTable />
      </div>
      <div className="mt-5 flex gap-[11px] pl-[746px]">
        <ActionButton className="w-20">Refresh</ActionButton>
        <ActionButton className="w-[148px]">Add a New Data</ActionButton>
        <ActionButton className="w-[249px]">Reverse All Data from MySQL</ActionButton>
      </div>
      <div className="mt-[26px] ml-[211px] flex h-[47px] w-[1569px] text-[18.8px] leading-[30px]">
        <div className="flex flex-1 items-center justify-between overflow-hidden rounded-l-[5px] border border-r-0 border-[#ced4da] bg-white pl-[15px] text-[#495057]">
          <span className="tracking-[0.15px]">Choose a file (.csv) to upload</span>
          <span className="flex h-full w-[95px] items-center justify-center border-l border-[#ced4da] bg-[#e9ecef]">Browse</span>
        </div>
        <button className="w-[260px] rounded-r-[5px] border border-[#dc3545] whitespace-nowrap text-[#dc3545]">Upload and Replace Table</button>
      </div>
      <div className="mt-[98px] ml-[496px]">
        <GoogleMap />
      </div>
    </div>
  );
}
